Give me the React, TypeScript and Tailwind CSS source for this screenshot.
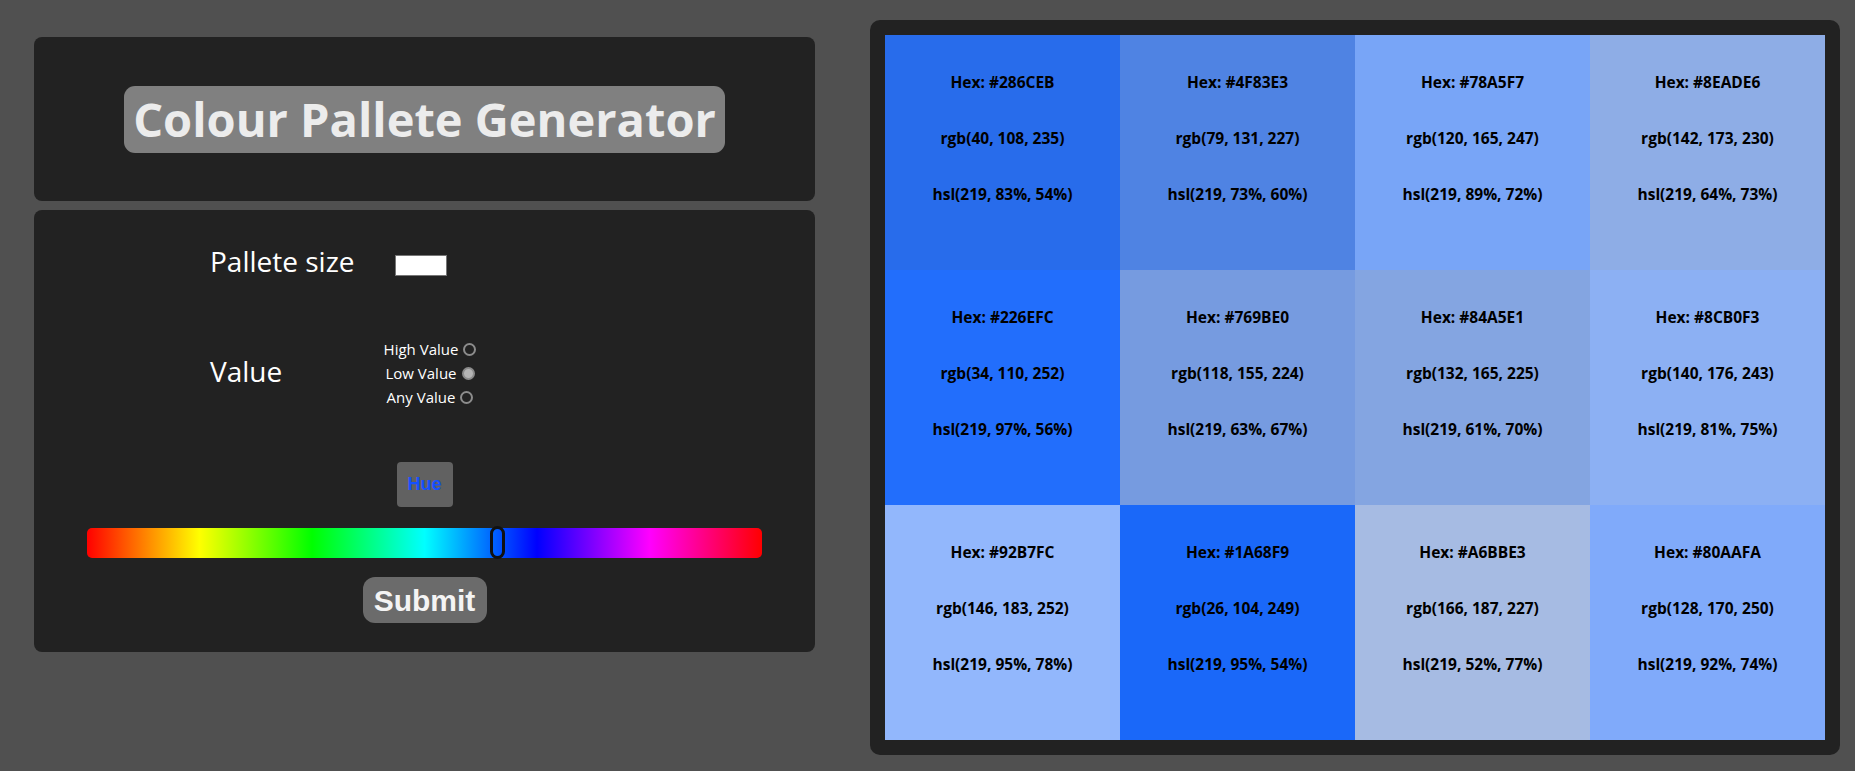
import React from "react";

const cells = [
  { hex: "#286CEB", rgb: "rgb(40, 108, 235)", hsl: "hsl(219, 83%, 54%)" },
  { hex: "#4F83E3", rgb: "rgb(79, 131, 227)", hsl: "hsl(219, 73%, 60%)" },
  { hex: "#78A5F7", rgb: "rgb(120, 165, 247)", hsl: "hsl(219, 89%, 72%)" },
  { hex: "#8EADE6", rgb: "rgb(142, 173, 230)", hsl: "hsl(219, 64%, 73%)" },
  { hex: "#226EFC", rgb: "rgb(34, 110, 252)", hsl: "hsl(219, 97%, 56%)" },
  { hex: "#769BE0", rgb: "rgb(118, 155, 224)", hsl: "hsl(219, 63%, 67%)" },
  { hex: "#84A5E1", rgb: "rgb(132, 165, 225)", hsl: "hsl(219, 61%, 70%)" },
  { hex: "#8CB0F3", rgb: "rgb(140, 176, 243)", hsl: "hsl(219, 81%, 75%)" },
  { hex: "#92B7FC", rgb: "rgb(146, 183, 252)", hsl: "hsl(219, 95%, 78%)" },
  { hex: "#1A68F9", rgb: "rgb(26, 104, 249)", hsl: "hsl(219, 95%, 54%)" },
  { hex: "#A6BBE3", rgb: "rgb(166, 187, 227)", hsl: "hsl(219, 52%, 77%)" },
  { hex: "#80AAFA", rgb: "rgb(128, 170, 250)", hsl: "hsl(219, 92%, 74%)" },
];

const seg = { fontFamily: '"Segoe UI", "Open Sans", "Noto Sans", sans-serif' };
const arial = { fontFamily: '"Liberation Sans", Arial, sans-serif' };

function Radio({ checked }: { checked?: boolean }) {
  return checked ? (
    <span className="ml-[5px] inline-block h-[13px] w-[13px] rounded-full border-2 border-[#8c8c8c] bg-[#b5b5b5]" />
  ) : (
    <span className="ml-[5px] inline-block h-[13px] w-[13px] rounded-full border-2 border-[#8c8c8c] bg-[#222222]" />
  );
}

export default function App() {
  return (
    <div className="flex min-h-screen w-full items-start gap-[55px] bg-[#505050] pl-[34px] pt-[20px]" style={seg}>
      <div className="mt-[17px] flex w-[781px] flex-col gap-[9px]">
        <div className="flex h-[164px] items-center justify-center rounded-lg bg-[#222222]">
          <div className="flex h-[67px] w-[601px] items-center justify-center rounded-[11px] bg-[#808080]">
            <span className="text-[47px] font-bold leading-none text-[#ececec]">Colour Pallete Generator</span>
          </div>
        </div>
        <div className="flex h-[442px] flex-col rounded-lg bg-[#222222]">
          <div className="mt-[36px] flex h-[30px] items-center pl-[176px]">
            <span className="w-[185px] text-[28px] leading-[30px] text-white">Pallete size</span>
            <span className="mt-[8px] inline-block h-[21px] w-[52px] border border-[#767676] bg-white" />
          </div>
          <div className="mt-[61px] flex items-center pl-[176px]">
            <span className="-mt-[4px] w-[136px] text-[28px] leading-[30px] text-white">Value</span>
            <div className="flex w-[168px] flex-col items-center text-[15px] leading-[24px] text-white">
              <div className="flex items-center">High Value<Radio /></div>
              <div className="flex items-center">Low Value<Radio checked /></div>
              <div className="flex items-center">Any Value<Radio /></div>
            </div>
          </div>
          <div className="mt-[53px] flex justify-center">
            <div className="flex h-[45px] w-[56px] items-center justify-center rounded-[4px] bg-[#616161] text-[18px] font-bold text-[#1550ff]" style={arial}>
              Hue
            </div>
          </div>
          <div className="mt-[21px] flex justify-center">
            <div
              className="relative h-[30px] w-[675px] rounded-[5px]"
              style={{
                background:
                  "linear-gradient(to right, #ff0000 0%, #ffff00 16.67%, #00ff00 33.33%, #00ffff 50%, #0000ff 66.67%, #ff00ff 83.33%, #ff0000 100%)",
              }}
            >
              <div className="absolute left-[403px] top-[-2px] h-[33px] w-[15px] rounded-full border-[3px] border-[#111111]" />
            </div>
          </div>
          <div className="mt-[19px] flex justify-center">
            <div className="flex h-[46px] w-[124px] items-center justify-center rounded-[12px] bg-[#6b6b6b] text-[30px] font-bold text-[#f4f4f4]" style={arial}>
              Submit
            </div>
          </div>
        </div>
      </div>
      <div className="rounded-[10px] bg-[#222222] p-[15px]">
        <div className="grid w-[940px] grid-cols-4">
          {cells.map((c) => (
            <div key={c.hex} className="flex h-[235px] flex-col items-center gap-[36px] pt-[37px] text-[15.5px] font-bold leading-[20px] text-black" style={{ backgroundColor: c.hex }}>
              <span>Hex: {c.hex}</span>
              <span>{c.rgb}</span>
              <span>{c.hsl}</span>
            </div>
          ))}
        </div>
      </div>
    </div>
  );
}
